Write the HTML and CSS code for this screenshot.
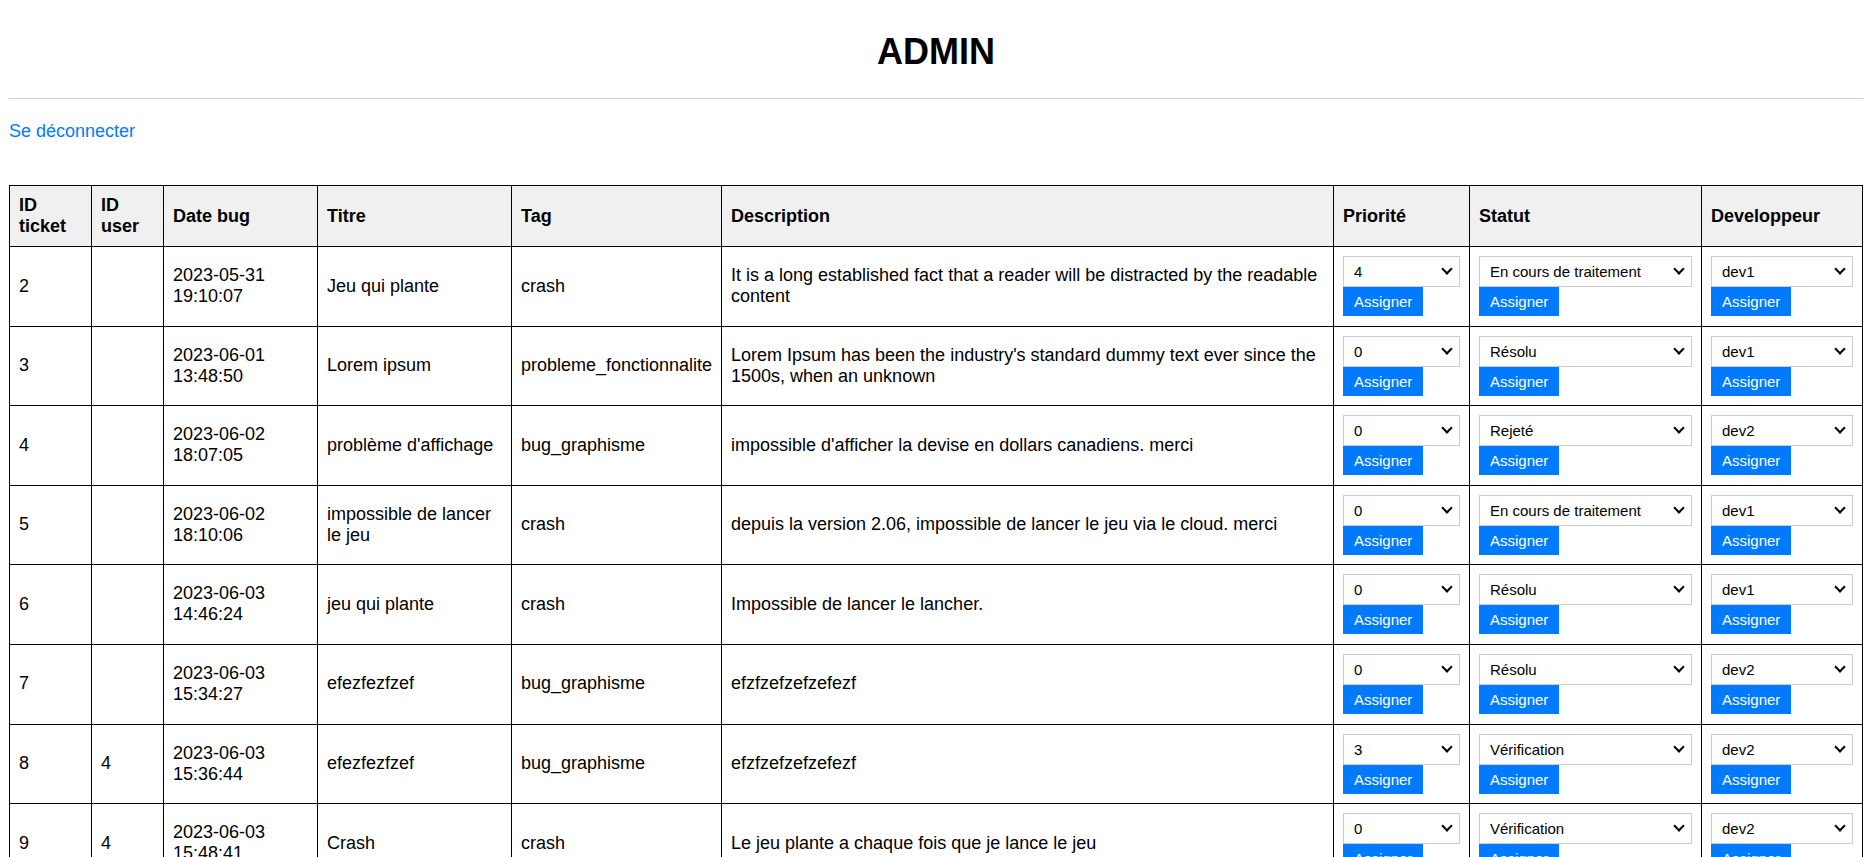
FILE: index.html
```html
<!DOCTYPE html>
<html lang="fr">
<head>
<meta charset="utf-8">
<title>ADMIN</title>
<link rel="stylesheet" href="styles.css">
</head>
<body>
<div class="page">
  <header class="top">
    <h1 class="title">ADMIN</h1>
    <hr class="rule">
  </header>
  <a class="logout" href="#">Se déconnecter</a>

  <table class="tickets">
    <colgroup>
      <col class="c-id"><col class="c-user"><col class="c-date"><col class="c-titre"><col class="c-tag"><col class="c-desc"><col class="c-prio"><col class="c-statut"><col class="c-dev">
    </colgroup>
    <thead>
      <tr>
        <th>ID ticket</th><th>ID user</th><th>Date bug</th><th>Titre</th><th>Tag</th><th>Description</th><th>Priorité</th><th>Statut</th><th>Developpeur</th>
      </tr>
    </thead>
    <tbody>
      <tr>
        <td>2</td><td></td><td>2023-05-31 19:10:07</td><td>Jeu qui plante</td><td>crash</td>
        <td>It is a long established fact that a reader will be distracted by the readable content</td>
        <td><form class="assign"><span class="sel"><select><option>0</option><option>1</option><option>2</option><option>3</option><option selected>4</option><option>5</option></select></span><button type="button" class="btn">Assigner</button></form></td>
        <td><form class="assign"><span class="sel"><select><option selected>En cours de traitement</option><option>Résolu</option><option>Rejeté</option><option>Vérification</option></select></span><button type="button" class="btn">Assigner</button></form></td>
        <td><form class="assign"><span class="sel"><select><option selected>dev1</option><option>dev2</option></select></span><button type="button" class="btn">Assigner</button></form></td>
      </tr>
      <tr>
        <td>3</td><td></td><td>2023-06-01 13:48:50</td><td>Lorem ipsum</td><td>probleme_fonctionnalite</td>
        <td>Lorem Ipsum has been the industry's standard dummy text ever since the 1500s, when an unknown</td>
        <td><form class="assign"><span class="sel"><select><option selected>0</option><option>1</option><option>2</option><option>3</option><option>4</option><option>5</option></select></span><button type="button" class="btn">Assigner</button></form></td>
        <td><form class="assign"><span class="sel"><select><option>En cours de traitement</option><option selected>Résolu</option><option>Rejeté</option><option>Vérification</option></select></span><button type="button" class="btn">Assigner</button></form></td>
        <td><form class="assign"><span class="sel"><select><option selected>dev1</option><option>dev2</option></select></span><button type="button" class="btn">Assigner</button></form></td>
      </tr>
      <tr>
        <td>4</td><td></td><td>2023-06-02 18:07:05</td><td>problème d'affichage</td><td>bug_graphisme</td>
        <td>impossible d'afficher la devise en dollars canadiens. merci</td>
        <td><form class="assign"><span class="sel"><select><option selected>0</option><option>1</option><option>2</option><option>3</option><option>4</option><option>5</option></select></span><button type="button" class="btn">Assigner</button></form></td>
        <td><form class="assign"><span class="sel"><select><option>En cours de traitement</option><option>Résolu</option><option selected>Rejeté</option><option>Vérification</option></select></span><button type="button" class="btn">Assigner</button></form></td>
        <td><form class="assign"><span class="sel"><select><option>dev1</option><option selected>dev2</option></select></span><button type="button" class="btn">Assigner</button></form></td>
      </tr>
      <tr>
        <td>5</td><td></td><td>2023-06-02 18:10:06</td><td>impossible de lancer le jeu</td><td>crash</td>
        <td>depuis la version 2.06, impossible de lancer le jeu via le cloud. merci</td>
        <td><form class="assign"><span class="sel"><select><option selected>0</option><option>1</option><option>2</option><option>3</option><option>4</option><option>5</option></select></span><button type="button" class="btn">Assigner</button></form></td>
        <td><form class="assign"><span class="sel"><select><option selected>En cours de traitement</option><option>Résolu</option><option>Rejeté</option><option>Vérification</option></select></span><button type="button" class="btn">Assigner</button></form></td>
        <td><form class="assign"><span class="sel"><select><option selected>dev1</option><option>dev2</option></select></span><button type="button" class="btn">Assigner</button></form></td>
      </tr>
      <tr>
        <td>6</td><td></td><td>2023-06-03 14:46:24</td><td>jeu qui plante</td><td>crash</td>
        <td>Impossible de lancer le lancher.</td>
        <td><form class="assign"><span class="sel"><select><option selected>0</option><option>1</option><option>2</option><option>3</option><option>4</option><option>5</option></select></span><button type="button" class="btn">Assigner</button></form></td>
        <td><form class="assign"><span class="sel"><select><option>En cours de traitement</option><option selected>Résolu</option><option>Rejeté</option><option>Vérification</option></select></span><button type="button" class="btn">Assigner</button></form></td>
        <td><form class="assign"><span class="sel"><select><option selected>dev1</option><option>dev2</option></select></span><button type="button" class="btn">Assigner</button></form></td>
      </tr>
      <tr>
        <td>7</td><td></td><td>2023-06-03 15:34:27</td><td>efezfezfzef</td><td>bug_graphisme</td>
        <td>efzfzefzefzefezf</td>
        <td><form class="assign"><span class="sel"><select><option selected>0</option><option>1</option><option>2</option><option>3</option><option>4</option><option>5</option></select></span><button type="button" class="btn">Assigner</button></form></td>
        <td><form class="assign"><span class="sel"><select><option>En cours de traitement</option><option selected>Résolu</option><option>Rejeté</option><option>Vérification</option></select></span><button type="button" class="btn">Assigner</button></form></td>
        <td><form class="assign"><span class="sel"><select><option>dev1</option><option selected>dev2</option></select></span><button type="button" class="btn">Assigner</button></form></td>
      </tr>
      <tr>
        <td>8</td><td>4</td><td>2023-06-03 15:36:44</td><td>efezfezfzef</td><td>bug_graphisme</td>
        <td>efzfzefzefzefezf</td>
        <td><form class="assign"><span class="sel"><select><option>0</option><option>1</option><option>2</option><option selected>3</option><option>4</option><option>5</option></select></span><button type="button" class="btn">Assigner</button></form></td>
        <td><form class="assign"><span class="sel"><select><option>En cours de traitement</option><option>Résolu</option><option>Rejeté</option><option selected>Vérification</option></select></span><button type="button" class="btn">Assigner</button></form></td>
        <td><form class="assign"><span class="sel"><select><option>dev1</option><option selected>dev2</option></select></span><button type="button" class="btn">Assigner</button></form></td>
      </tr>
      <tr>
        <td>9</td><td>4</td><td>2023-06-03 15:48:41</td><td>Crash</td><td>crash</td>
        <td>Le jeu plante a chaque fois que je lance le jeu</td>
        <td><form class="assign"><span class="sel"><select><option selected>0</option><option>1</option><option>2</option><option>3</option><option>4</option><option>5</option></select></span><button type="button" class="btn">Assigner</button></form></td>
        <td><form class="assign"><span class="sel"><select><option>En cours de traitement</option><option>Résolu</option><option>Rejeté</option><option selected>Vérification</option></select></span><button type="button" class="btn">Assigner</button></form></td>
        <td><form class="assign"><span class="sel"><select><option>dev1</option><option selected>dev2</option></select></span><button type="button" class="btn">Assigner</button></form></td>
      </tr>
    </tbody>
  </table>
</div>
</body>
</html>
```
FILE: styles.css
```css
html, body {
  margin: 0;
  padding: 0;
  background: #fff;
}

body {
  font-family: "Liberation Sans", Arial, sans-serif;
  font-size: 18px;
  line-height: normal;
  color: #000;
}

.page {
  padding: 0 12px 40px 9px;
}

.top {
  padding-top: 31px;
}

.title {
  margin: 0 0 26px;
  font-size: 36px;
  line-height: 41px;
  font-weight: bold;
  text-align: center;
}

.rule {
  margin: 0;
  height: 0;
  border: 0;
  border-top: 1px solid #cfcfcf;
}

.logout {
  display: inline-block;
  margin-top: 22px;
  color: #007bff;
  text-decoration: none;
  line-height: 21px;
}

.tickets {
  margin-top: 43px;
  width: 100%;
  border-collapse: collapse;
  table-layout: fixed;
}

.c-id { width: 82px; }
.c-user { width: 72px; }
.c-date { width: 154px; }
.c-titre { width: 194px; }
.c-tag { width: 210px; }
.c-desc { width: 612px; }
.c-prio { width: 136px; }
.c-statut { width: 232px; }
.c-dev { width: 161px; }

.tickets th,
.tickets td {
  border: 1px solid #000;
  padding: 9px;
  text-align: left;
  vertical-align: middle;
}

.tickets th {
  background: #f0f0f0;
  font-weight: bold;
}

.tickets td {
  padding-bottom: 9.6px;
}

.assign {
  margin: 0;
}

.sel {
  position: relative;
  display: block;
}

.sel::after {
  content: "";
  position: absolute;
  right: 9px;
  top: 9px;
  width: 6px;
  height: 6px;
  border-right: 2px solid #000;
  border-bottom: 2px solid #000;
  transform: rotate(45deg);
  pointer-events: none;
}

.sel select {
  -webkit-appearance: none;
  appearance: none;
  display: block;
  box-sizing: border-box;
  width: 100%;
  height: 31px;
  margin: 0;
  padding: 0 24px 0 10px;
  border: 1px solid #cccccc;
  border-radius: 0;
  background: #fff;
  color: #000;
  font-family: "Liberation Sans", Arial, sans-serif;
  font-size: 15px;
}

.btn {
  display: block;
  height: 29px;
  margin: 0;
  padding: 0 11px;
  border: 0;
  border-radius: 0;
  background: #007bff;
  color: #fff;
  font-family: "Liberation Sans", Arial, sans-serif;
  font-size: 15px;
  line-height: 29px;
  cursor: pointer;
}
```
